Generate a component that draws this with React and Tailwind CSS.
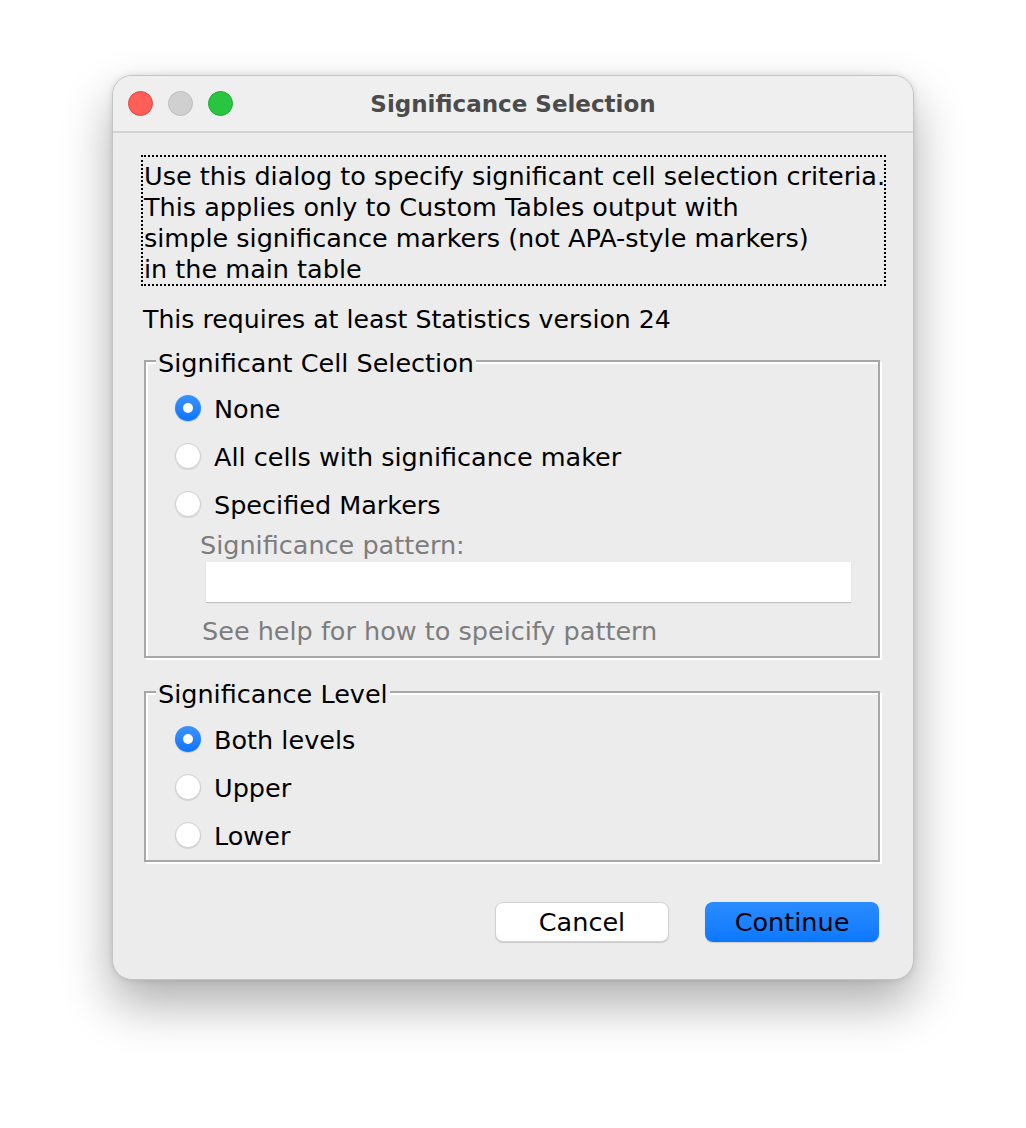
import React from 'react';

const font = { fontFamily: '"DejaVu Sans", "Liberation Sans", sans-serif' };

const Radio = ({ checked, label }) => (
  <div className="flex items-center h-[48px] gap-[13px]">
    {checked ? (
      <span className="w-[26px] h-[26px] shrink-0 rounded-full bg-gradient-to-b from-[#3a92ff] to-[#0a74ff] shadow-[0_1px_1px_rgba(0,0,0,0.15)] flex items-center justify-center">
        <span className="w-[10px] h-[10px] rounded-full bg-white" />
      </span>
    ) : (
      <span className="w-[26px] h-[26px] shrink-0 rounded-full bg-white border border-[#cfcfcf] shadow-[0_1px_1px_rgba(0,0,0,0.1)]" />
    )}
    <span className="pt-[2px] text-[25.5px] leading-[31px] text-black whitespace-nowrap">{label}</span>
  </div>
);

const Group = ({ title, className, children }) => (
  <div
    className={
      'relative border-2 border-[#a7a7a7] shadow-[2px_2px_0_#ffffff,inset_2px_2px_0_#ffffff] ' +
      className
    }
  >
    <span className="absolute left-[10px] top-[-14px] px-[2px] bg-[#ececec] text-[25.5px] leading-[31px] text-black whitespace-nowrap">
      {title}
    </span>
    {children}
  </div>
);

export default function App() {
  return (
    <div className="w-[1026px] h-[1128px] bg-white pt-[75px] pl-[112px]" style={font}>
      <div className="w-[802px] h-[905px] rounded-[20px] bg-[#ececec] border border-[#c4c4c4] shadow-[0_24px_50px_rgba(0,0,0,0.32),0_0_6px_rgba(0,0,0,0.12)] overflow-hidden flex flex-col">
        {/* title bar */}
        <div className="h-[57px] shrink-0 bg-[#efefef] border-b-2 border-[#d3d3d3] grid grid-cols-[1fr_auto_1fr] items-center">
          <div className="flex items-center gap-[15px] pl-[15px]">
            <span className="w-[25px] h-[25px] rounded-full bg-[#ff5f57] border border-[#e2463f]" />
            <span className="w-[25px] h-[25px] rounded-full bg-[#d0d0d0] border border-[#bcbcbc]" />
            <span className="w-[25px] h-[25px] rounded-full bg-[#29c440] border border-[#1dad2b]" />
          </div>
          <div className="pt-[2px] text-[23px] font-bold text-[#4b4b4b] whitespace-nowrap">Significance Selection</div>
          <div />
        </div>

        {/* content */}
        <div className="flex flex-col pl-[28px] pr-[27px]">
          <div className="mt-[22px] h-[131px] border-2 border-dotted border-black pl-[1px] pt-[4px] text-[25.5px] leading-[31px] text-black whitespace-nowrap">
            <div>Use this dialog to specify significant cell selection criteria.</div>
            <div>This applies only to Custom Tables output with</div>
            <div>simple significance markers (not APA-style markers)</div>
            <div>in the main table</div>
          </div>

          <div className="mt-[16px] pt-[2px] pl-[2px] text-[25.2px] leading-[31px] text-black whitespace-nowrap">
            This requires at least Statistics version 24
          </div>

          <div className="pl-[3px] pr-[6px]">
            <Group title="Significant Cell Selection" className="mt-[25px] h-[298px] pt-[22px] pl-[29px]">
              <Radio checked label="None" />
              <Radio label="All cells with significance maker" />
              <Radio label="Specified Markers" />
              <div className="pt-[2px] pl-[25px] text-[25.5px] leading-[31px] text-[#7d7d7d]">Significance pattern:</div>
              <div className="ml-[31px] mr-[27px] mt-[1px] h-[40px] bg-white shadow-[0_1px_1px_rgba(0,0,0,0.18)]" />
              <div className="pl-[27px] mt-[13px] pt-[1px] text-[25.5px] leading-[31px] text-[#7d7d7d]">
                See help for how to speicify pattern
              </div>
            </Group>

            <Group title="Significance Level" className="mt-[33px] h-[171px] pt-[22px] pl-[29px]">
              <Radio checked label="Both levels" />
              <Radio label="Upper" />
              <Radio label="Lower" />
            </Group>
          </div>

          <div className="mt-[40px] flex justify-end gap-[36px] pr-[7px]">
            <button className="w-[174px] h-[40px] rounded-[8px] bg-white border border-[#d2d2d2] shadow-[0_1px_1px_rgba(0,0,0,0.15)] text-[25.5px] leading-[31px] pt-[1px] text-black">
              Cancel
            </button>
            <button className="w-[174px] h-[40px] rounded-[8px] bg-gradient-to-b from-[#2b8cff] to-[#0a78ff] shadow-[0_1px_1px_rgba(0,0,0,0.15)] text-[25.5px] leading-[31px] pt-[1px] text-black">
              Continue
            </button>
          </div>
        </div>
      </div>
    </div>
  );
}
